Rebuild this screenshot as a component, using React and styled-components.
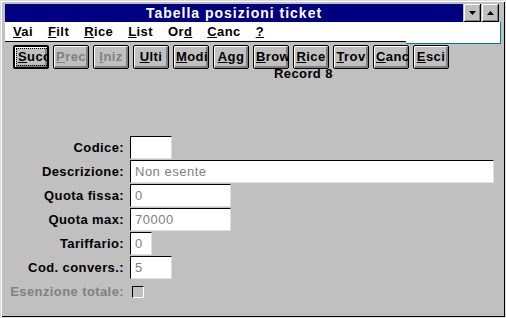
import React from 'react'
import styled, { createGlobalStyle } from 'styled-components'

const GlobalStyle = createGlobalStyle`
    html, body {
        margin: 0;
        padding: 0;
        background: #c0c0c0;
    }
    body {
        font-family: "Liberation Sans", Arial, sans-serif;
    }
`;

const Window = styled.div`
    box-sizing: border-box;
    width: 506px;
    height: 318px;
    border: 1px solid #dcdcdc;
    box-shadow: inset 1px 1px #ffffff, inset -1px -1px #000000;
    background: #c0c0c0;
    padding: 3px 4px 0 4px;
    overflow: hidden;
`;

const TitleRow = styled.div`
    display: flex;
    height: 18px;
    gap: 1px;
    padding-right: 2px;
`;

const TitleBar = styled.div`
    flex: 1;
    background: #000080;
    color: #ffffff;
    font-weight: bold;
    font-size: 14px;
    letter-spacing: 1px;
    display: flex;
    align-items: center;
    justify-content: center;
`;

const CaptionButton = styled.div`
    box-sizing: border-box;
    width: 17px;
    height: 18px;
    background: #c0c0c0;
    border-right: 1px solid #000;
    border-bottom: 1px solid #000;
    box-shadow: inset 1px 1px #ffffff, inset -1px -1px #808080;
    display: flex;
    align-items: center;
    justify-content: center;
`;

const MenuRow = styled.div`
    display: flex;
    align-items: flex-start;
    height: 22px;
`;

const MenuLeft = styled.div`
    box-sizing: border-box;
    width: 401px;
    height: 20px;
    background: #ffffff;
    border-bottom: 1px solid #000;
    display: flex;
    align-items: center;
    gap: 15px;
    padding-left: 8px;
`;

const MenuRight = styled.div`
    box-sizing: border-box;
    flex: 1;
    height: 22px;
    background: #ffffff;
    border-right: 1px solid #008080;
    border-bottom: 1px solid #008080;
`;

const MenuItem = styled.span`
    font-size: 13px;
    font-weight: bold;
    letter-spacing: 0.4px;
    color: #000;
    margin-right: ${p => p.$extra || 0}px;
`;

const Toolbar = styled.div`
    display: flex;
    gap: 4px;
    padding-left: 8px;
    margin-top: 1px;
`;

const ToolButton = styled.button`
    box-sizing: border-box;
    width: 36px;
    height: 24px;
    padding: 0 2px;
    margin: 0;
    background: #c0c0c0;
    border: ${p => (p.$default ? '2px' : '1px')} solid #000;
    border-radius: 2px;
    box-shadow: inset 1px 1px #ffffff, inset -2px -2px #808080;
    font-family: "Liberation Sans", Arial, sans-serif;
    font-size: 13px;
    font-weight: bold;
    letter-spacing: 0.4px;
    color: ${p => (p.disabled ? '#808080' : '#000')};
    text-align: center;
    white-space: nowrap;
    overflow: hidden;
    line-height: 16px;
`;

const Focus = styled.span`
    display: inline-block;
    outline: 1px dotted #000;
    padding: 0 1px;
`;

const RecordLabel = styled.div`
    padding-left: 269px;
    margin-top: -2px;
    font-size: 13px;
    line-height: 13px;
    font-weight: bold;
    letter-spacing: 0.4px;
    color: #000;
`;

const Form = styled.div`
    display: grid;
    grid-template-columns: 119px auto;
    grid-auto-rows: 23px;
    column-gap: 6px;
    row-gap: 1px;
    margin-top: 56px;
`;

const Label = styled.div`
    font-size: 13px;
    font-weight: bold;
    letter-spacing: 0.4px;
    color: ${p => (p.$disabled ? '#808080' : '#000')};
    text-align: right;
    white-space: nowrap;
    align-self: center;
`;

const Field = styled.div`
    box-sizing: border-box;
    width: ${p => p.$w}px;
    height: 23px;
    background: #ffffff;
    border-style: solid;
    border-width: 1px;
    border-color: #000 #dfdfdf #dfdfdf #000;
    padding-left: 4px;
    font-size: 13px;
    letter-spacing: 0.5px;
    color: #808080;
    display: flex;
    align-items: center;
    white-space: nowrap;
    overflow: hidden;
`;

const CheckRow = styled.div`
    display: contents;
`;

const Check = styled.div`
    box-sizing: border-box;
    width: 12px;
    height: 12px;
    margin-left: 2px;
    align-self: center;
    border-style: solid;
    border-width: 1px;
    border-color: #000 #ffffff #ffffff #000;
    background: #c0c0c0;
`;

const Arrow = ({ up }) => (
  <svg width="7" height="4" viewBox="0 0 7 4">
    <polygon points={up ? '3.5,0 7,4 0,4' : '0,0 7,0 3.5,4'} fill="#000" />
  </svg>
);

const menu = [
  { pre: '', u: 'V', post: 'ai' },
  { pre: '', u: 'F', post: 'ilt' },
  { pre: '', u: 'R', post: 'ice' },
  { pre: '', u: 'L', post: 'ist' },
  { pre: 'Or', u: 'd', post: '' },
  { pre: '', u: 'C', post: 'anc' },
  { pre: '', u: '?', post: '' },
];

const buttons = [
  { u: 'S', rest: 'ucc', def: true },
  { u: 'P', rest: 'rec', off: true },
  { u: 'I', rest: 'niz', off: true },
  { u: 'U', rest: 'lti' },
  { u: 'M', rest: 'odi' },
  { u: 'A', rest: 'gg' },
  { u: 'B', rest: 'row' },
  { u: 'R', rest: 'ice' },
  { u: 'T', rest: 'rov' },
  { u: 'C', rest: 'anc' },
  { u: 'E', rest: 'sci' },
];

const fields = [
  { label: 'Codice:', w: 42, value: '' },
  { label: 'Descrizione:', w: 364, value: 'Non esente' },
  { label: 'Quota fissa:', w: 101, value: '0' },
  { label: 'Quota max:', w: 101, value: '70000' },
  { label: 'Tariffario:', w: 22, value: '0' },
  { label: 'Cod. convers.:', w: 42, value: '5' },
];

const App = () => {
  return (
    <>
      <GlobalStyle />
      <Window>
        <TitleRow>
          <TitleBar>Tabella posizioni ticket</TitleBar>
          <CaptionButton><Arrow /></CaptionButton>
          <CaptionButton><Arrow up /></CaptionButton>
        </TitleRow>
        <MenuRow>
          <MenuLeft>
            {menu.map((m, i) => (
              <MenuItem key={i}>{m.pre}<u>{m.u}</u>{m.post}</MenuItem>
            ))}
          </MenuLeft>
          <MenuRight />
        </MenuRow>
        <Toolbar>
          {buttons.map((b, i) => (
            <ToolButton key={i} $default={b.def} disabled={b.off}>
              {b.def
                ? <Focus><u>{b.u}</u>{b.rest}</Focus>
                : <><u>{b.u}</u>{b.rest}</>}
            </ToolButton>
          ))}
        </Toolbar>
        <RecordLabel>Record 8</RecordLabel>
        <Form>
          {fields.map((f, i) => (
            <React.Fragment key={i}>
              <Label>{f.label}</Label>
              <Field $w={f.w}>{f.value}</Field>
            </React.Fragment>
          ))}
          <CheckRow>
            <Label $disabled>Esenzione totale:</Label>
            <Check />
          </CheckRow>
        </Form>
      </Window>
    </>
  );
};

export default App
